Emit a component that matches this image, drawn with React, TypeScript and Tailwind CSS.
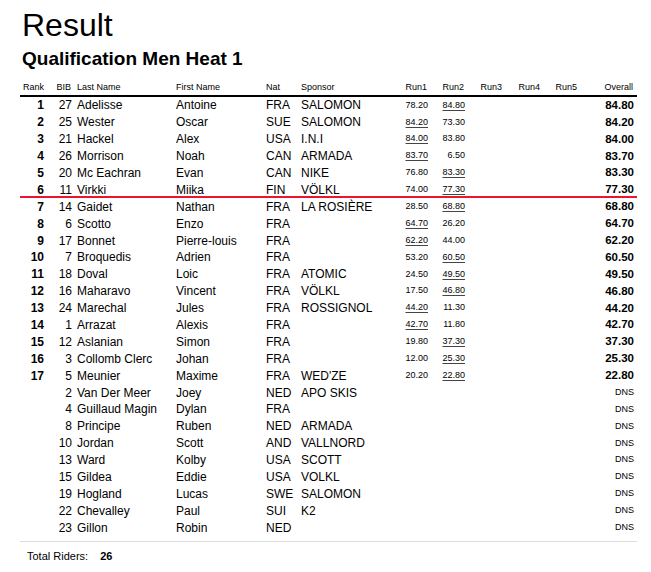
import React from 'react';

type Rider = {
  rank?: number;
  bib: number;
  last: string;
  first: string;
  nat: string;
  sponsor?: string;
  run1?: string;
  run2?: string;
  best?: 1 | 2;
  overall?: string;
};

const riders: Rider[] = [
  { rank: 1, bib: 27, last: 'Adelisse', first: 'Antoine', nat: 'FRA', sponsor: 'SALOMON', run1: '78.20', run2: '84.80', best: 2, overall: '84.80' },
  { rank: 2, bib: 25, last: 'Wester', first: 'Oscar', nat: 'SUE', sponsor: 'SALOMON', run1: '84.20', run2: '73.30', best: 1, overall: '84.20' },
  { rank: 3, bib: 21, last: 'Hackel', first: 'Alex', nat: 'USA', sponsor: 'I.N.I', run1: '84.00', run2: '83.80', best: 1, overall: '84.00' },
  { rank: 4, bib: 26, last: 'Morrison', first: 'Noah', nat: 'CAN', sponsor: 'ARMADA', run1: '83.70', run2: '6.50', best: 1, overall: '83.70' },
  { rank: 5, bib: 20, last: 'Mc Eachran', first: 'Evan', nat: 'CAN', sponsor: 'NIKE', run1: '76.80', run2: '83.30', best: 2, overall: '83.30' },
  { rank: 6, bib: 11, last: 'Virkki', first: 'Miika', nat: 'FIN', sponsor: 'VÖLKL', run1: '74.00', run2: '77.30', best: 2, overall: '77.30' },
  { rank: 7, bib: 14, last: 'Gaidet', first: 'Nathan', nat: 'FRA', sponsor: 'LA ROSIÈRE', run1: '28.50', run2: '68.80', best: 2, overall: '68.80' },
  { rank: 8, bib: 6, last: 'Scotto', first: 'Enzo', nat: 'FRA', run1: '64.70', run2: '26.20', best: 1, overall: '64.70' },
  { rank: 9, bib: 17, last: 'Bonnet', first: 'Pierre-louis', nat: 'FRA', run1: '62.20', run2: '44.00', best: 1, overall: '62.20' },
  { rank: 10, bib: 7, last: 'Broquedis', first: 'Adrien', nat: 'FRA', run1: '53.20', run2: '60.50', best: 2, overall: '60.50' },
  { rank: 11, bib: 18, last: 'Doval', first: 'Loic', nat: 'FRA', sponsor: 'ATOMIC', run1: '24.50', run2: '49.50', best: 2, overall: '49.50' },
  { rank: 12, bib: 16, last: 'Maharavo', first: 'Vincent', nat: 'FRA', sponsor: 'VÖLKL', run1: '17.50', run2: '46.80', best: 2, overall: '46.80' },
  { rank: 13, bib: 24, last: 'Marechal', first: 'Jules', nat: 'FRA', sponsor: 'ROSSIGNOL', run1: '44.20', run2: '11.30', best: 1, overall: '44.20' },
  { rank: 14, bib: 1, last: 'Arrazat', first: 'Alexis', nat: 'FRA', run1: '42.70', run2: '11.80', best: 1, overall: '42.70' },
  { rank: 15, bib: 12, last: 'Aslanian', first: 'Simon', nat: 'FRA', run1: '19.80', run2: '37.30', best: 2, overall: '37.30' },
  { rank: 16, bib: 3, last: 'Collomb Clerc', first: 'Johan', nat: 'FRA', run1: '12.00', run2: '25.30', best: 2, overall: '25.30' },
  { rank: 17, bib: 5, last: 'Meunier', first: 'Maxime', nat: 'FRA', sponsor: "WED'ZE", run1: '20.20', run2: '22.80', best: 2, overall: '22.80' },
  { bib: 2, last: 'Van Der Meer', first: 'Joey', nat: 'NED', sponsor: 'APO SKIS' },
  { bib: 4, last: 'Guillaud Magin', first: 'Dylan', nat: 'FRA' },
  { bib: 8, last: 'Principe', first: 'Ruben', nat: 'NED', sponsor: 'ARMADA' },
  { bib: 10, last: 'Jordan', first: 'Scott', nat: 'AND', sponsor: 'VALLNORD' },
  { bib: 13, last: 'Ward', first: 'Kolby', nat: 'USA', sponsor: 'SCOTT' },
  { bib: 15, last: 'Gildea', first: 'Eddie', nat: 'USA', sponsor: 'VOLKL' },
  { bib: 19, last: 'Hogland', first: 'Lucas', nat: 'SWE', sponsor: 'SALOMON' },
  { bib: 22, last: 'Chevalley', first: 'Paul', nat: 'SUI', sponsor: 'K2' },
  { bib: 23, last: 'Gillon', first: 'Robin', nat: 'NED' },
];

// qualifiers above the cut line
const CUT_AFTER = 6;

const RunCell: React.FC<{ value?: string; best?: boolean; className: string }> = ({ value, best, className }) => (
  <div className={`${className} text-right text-[9px]`}>
    {value && (
      <span className={best ? 'underline decoration-[#444] underline-offset-[2px]' : ''}>{value}</span>
    )}
  </div>
);

export default function App() {
  return (
    <div
      className="w-[651px] h-[572px] bg-white text-black overflow-hidden"
      style={{ fontFamily: '"Liberation Sans", Arial, sans-serif' }}
    >
      <div className="pl-[22px] pt-[7px]">
        <h1 className="text-[32px] leading-[36px] font-normal">Result</h1>
        <h2 className="mt-[5px] text-[19px] leading-[22px] font-bold">Qualification Men Heat 1</h2>
      </div>

      <div className="ml-[20px] w-[617px]">
        {/* Header */}
        <div className="mt-[11px] flex h-[14px] items-center border-b-2 border-black text-[9px] box-content">
          <div className="w-[24px] text-right">Rank</div>
          <div className="w-[28px] text-right pr-[1px]">BIB</div>
          <div className="w-[104px] pl-[5px]">Last Name</div>
          <div className="w-[90px]">First Name</div>
          <div className="w-[35px]">Nat</div>
          <div className="w-[99px]">Sponsor</div>
          <div className="w-[28px] text-right pr-[1px]">Run1</div>
          <div className="w-[37px] text-right pr-[1px]">Run2</div>
          <div className="w-[38px] text-right pr-[1px]">Run3</div>
          <div className="w-[38px] text-right pr-[1px]">Run4</div>
          <div className="w-[37px] text-right pr-[1px]">Run5</div>
          <div className="w-[56px] text-right pr-[1px]">Overall</div>
        </div>

        {/* Rows */}
        <div>
          {riders.map((r, i) => (
            <React.Fragment key={r.bib}>
              <div className="flex h-[16.9px] items-center text-[12px]">
                <div className="w-[24px] text-right font-bold">{r.rank ?? ''}</div>
                <div className="w-[28px] text-right">{r.bib}</div>
                <div className="w-[104px] pl-[5px] whitespace-nowrap">{r.last}</div>
                <div className="w-[90px] whitespace-nowrap">{r.first}</div>
                <div className="w-[35px]">{r.nat}</div>
                <div className="w-[99px] whitespace-nowrap">{r.sponsor ?? ''}</div>
                <RunCell className="w-[28px]" value={r.run1} best={r.best === 1} />
                <RunCell className="w-[37px]" value={r.run2} best={r.best === 2} />
                <div className="w-[38px]" />
                <div className="w-[38px]" />
                <div className="w-[37px]" />
                {r.overall ? (
                  <div className="w-[56px] text-right text-[11.5px] font-bold">{r.overall}</div>
                ) : (
                  <div className="w-[56px] text-right text-[9px]">DNS</div>
                )}
              </div>
              {i === CUT_AFTER - 1 && <div className="-mt-[2px] h-[2px] bg-[#ee1430]" />}
            </React.Fragment>
          ))}
        </div>

        <div className="mt-[5px] h-px bg-[#dcdcdc]" />
      </div>

      {/* Footer */}
      <div className="mt-[7px] pl-[27px] flex items-center h-[14px] text-[11px]">
        <span>Total Riders:</span>
        <span className="ml-[12px] font-bold">26</span>
      </div>
    </div>
  );
}
